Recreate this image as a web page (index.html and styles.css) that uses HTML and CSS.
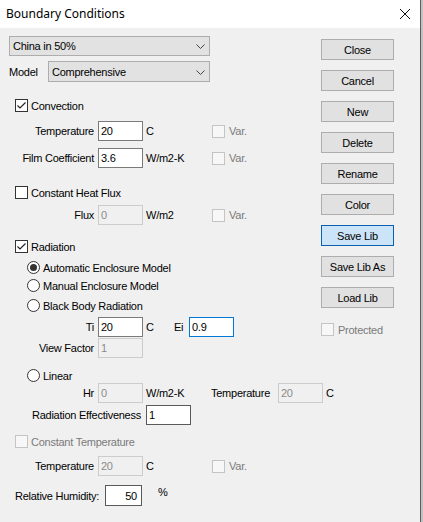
FILE: index.html
```html
<!DOCTYPE html>
<html>
<head>
<meta charset="utf-8">
<title>Boundary Conditions</title>
<link rel="stylesheet" href="styles.css">
</head>
<body>
<div class="window">
  <div class="titlebar">
    <span class="title">Boundary Conditions</span>
    <svg class="close-x" width="12" height="12" viewBox="0 0 12 12"><path d="M1 1 L11 11 M11 1 L1 11" stroke="#111" stroke-width="1"/></svg>
  </div>
  <div class="content">
    <div class="left">
      <div class="row r-lib">
        <div class="combo combo-lib"><span>China in 50%</span><svg width="9" height="5" viewBox="0 0 9 5"><path d="M0.5 0.5 L4.5 4.5 L8.5 0.5" fill="none" stroke="#444" stroke-width="1"/></svg></div>
      </div>
      <div class="row r-model">
        <span class="model-lbl">Model</span>
        <div class="combo combo-model"><span>Comprehensive</span><svg width="9" height="5" viewBox="0 0 9 5"><path d="M0.5 0.5 L4.5 4.5 L8.5 0.5" fill="none" stroke="#444" stroke-width="1"/></svg></div>
      </div>

      <div class="row r-conv">
        <span class="cb"><svg width="11" height="11" viewBox="0 0 11 11"><path d="M1.5 5.5 L4 8 L9.5 2.5" fill="none" stroke="#222" stroke-width="1.2"/></svg></span>
        <span>Convection</span>
      </div>
      <div class="row r-temp">
        <span class="lbl">Temperature</span>
        <span class="field">20</span>
        <span class="unit">C</span>
        <span class="var"><span class="cb cb-dis"></span>Var.</span>
      </div>
      <div class="row r-film">
        <span class="lbl">Film Coefficient</span>
        <span class="field">3.6</span>
        <span class="unit">W/m2-K</span>
        <span class="var"><span class="cb cb-dis"></span>Var.</span>
      </div>

      <div class="row r-chf">
        <span class="cb"></span>
        <span>Constant Heat Flux</span>
      </div>
      <div class="row r-flux">
        <span class="lbl">Flux</span>
        <span class="field field-dis">0</span>
        <span class="unit">W/m2</span>
        <span class="var"><span class="cb cb-dis"></span>Var.</span>
      </div>

      <div class="row r-rad">
        <span class="cb"><svg width="11" height="11" viewBox="0 0 11 11"><path d="M1.5 5.5 L4 8 L9.5 2.5" fill="none" stroke="#222" stroke-width="1.2"/></svg></span>
        <span>Radiation</span>
      </div>
      <div class="row r-auto">
        <span class="radio radio-on"></span>
        <span>Automatic Enclosure Model</span>
      </div>
      <div class="row r-manual">
        <span class="radio"></span>
        <span>Manual Enclosure Model</span>
      </div>
      <div class="row r-black">
        <span class="radio"></span>
        <span>Black Body Radiation</span>
      </div>
      <div class="row r-ti">
        <span class="lbl">Ti</span>
        <span class="field">20</span>
        <span class="unit unit-short">C</span>
        <span class="ei-lbl">Ei</span>
        <span class="field field-focus">0.9</span>
      </div>
      <div class="row r-vf">
        <span class="lbl">View Factor</span>
        <span class="field field-dis">1</span>
      </div>

      <div class="row r-linear">
        <span class="radio"></span>
        <span>Linear</span>
      </div>
      <div class="row r-hr">
        <span class="lbl">Hr</span>
        <span class="field field-dis">0</span>
        <span class="unit unit-hr">W/m2-K</span>
        <span class="temp-lbl">Temperature</span>
        <span class="field field-dis">20</span>
        <span class="unit">C</span>
      </div>
      <div class="row r-eff">
        <span class="lbl lbl-wide">Radiation Effectiveness</span>
        <span class="field field-dark">1</span>
      </div>

      <div class="row r-ct">
        <span class="cb cb-dis"></span>
        <span class="disabled-text">Constant Temperature</span>
      </div>
      <div class="row r-ctemp">
        <span class="lbl">Temperature</span>
        <span class="field field-dis">20</span>
        <span class="unit">C</span>
        <span class="var"><span class="cb cb-dis"></span>Var.</span>
      </div>

      <div class="row r-rh">
        <span class="rh-lbl">Relative Humidity:</span>
        <span class="field field-rh">50</span>
        <span class="pct">%</span>
      </div>
    </div>

    <div class="right">
      <div class="btn">Close</div>
      <div class="btn">Cancel</div>
      <div class="btn">New</div>
      <div class="btn">Delete</div>
      <div class="btn">Rename</div>
      <div class="btn">Color</div>
      <div class="btn btn-focus">Save Lib</div>
      <div class="btn">Save Lib As</div>
      <div class="btn">Load Lib</div>
      <div class="protected"><span class="cb cb-dis cb-prot"></span>Protected</div>
    </div>
  </div>
</div>
</body>
</html>
```

FILE: styles.css
```css
html, body {
  margin: 0;
  padding: 0;
}
body {
  background: #c2c2c2;
  font-family: "Liberation Sans", Arial, sans-serif;
  font-size: 11px;
  letter-spacing: -0.25px;
  color: #000;
  width: 423px;
  height: 522px;
  overflow: hidden;
}
.window {
  width: 420px;
  height: 522px;
  background: #f0f0f0;
  border-right: 1px solid #5c5c5c;
}
.titlebar {
  height: 28px;
  background: #fff;
  display: flex;
  justify-content: space-between;
  align-items: center;
  padding: 0 9px 0 6px;
  box-sizing: border-box;
}
.title {
  font-family: "Noto Sans", "Liberation Sans", sans-serif;
  font-size: 12px;
  letter-spacing: 0;
  color: #000;
  margin-top: -1px;
}
.close-x {
  align-self: flex-start;
  margin-top: 8px;
}
.content {
  display: flex;
}
.left {
  width: 321px;
  flex: none;
}
.right {
  display: flex;
  flex-direction: column;
  gap: 10px;
  padding-top: 11px;
}
.row {
  display: flex;
  align-items: center;
  white-space: nowrap;
}

/* row positions */
.r-lib { margin-top: 8px; height: 20px; }
.r-model { margin-top: 5px; height: 21px; }
.r-conv { margin-top: 17px; height: 13px; }
.r-temp { margin-top: 9px; height: 20px; }
.r-film { margin-top: 7px; height: 20px; }
.r-chf { margin-top: 18px; height: 13px; }
.r-flux { margin-top: 6px; height: 20px; }
.r-rad { margin-top: 15px; height: 13px; }
.r-auto { margin-top: 8px; height: 13px; }
.r-manual { margin-top: 5px; height: 13px; }
.r-black { margin-top: 7px; height: 13px; }
.r-ti { margin-top: 5px; height: 20px; }
.r-vf { margin-top: 1px; height: 20px; }
.r-linear { margin-top: 11px; height: 13px; }
.r-hr { margin-top: 1px; height: 20px; }
.r-eff { margin-top: 2px; height: 20px; }
.r-ct { margin-top: 10px; height: 13px; }
.r-ctemp { margin-top: 8px; height: 20px; }
.r-rh { margin-top: 9px; height: 21px; }

/* combos */
.combo {
  height: 100%;
  box-sizing: border-box;
  border: 1px solid #adadad;
  background: #e2e2e2;
  display: flex;
  align-items: center;
  justify-content: space-between;
  padding: 0 4px 0 3px;
}
.combo svg { margin-top: 1px; }
.combo-lib {
  margin-left: 9px;
  width: 201px;
}
.model-lbl {
  margin-left: 9px;
  width: 39px;
}
.combo-model {
  width: 162px;
}

/* checkbox & radio */
.cb {
  width: 13px;
  height: 13px;
  box-sizing: border-box;
  border: 1px solid #333;
  background: #fff;
  margin-left: 15px;
  margin-right: 3px;
  display: flex;
  align-items: center;
  justify-content: center;
  flex: none;
}
.cb-dis {
  border-color: #c4c4c4;
  background: #f7f7f7;
}
.radio {
  width: 13px;
  height: 13px;
  box-sizing: border-box;
  border: 1px solid #333;
  border-radius: 50%;
  background: #fff;
  margin-left: 27px;
  margin-right: 3px;
  display: flex;
  align-items: center;
  justify-content: center;
  flex: none;
}
.radio-on::after {
  content: "";
  width: 7px;
  height: 7px;
  border-radius: 50%;
  background: #333;
}
.disabled-text {
  color: #7a7a7a;
}

/* labelled fields */
.lbl {
  width: 94px;
  margin-right: 4px;
  text-align: right;
  flex: none;
}
.lbl-wide {
  width: 141px;
  margin-right: 5px;
}
.field {
  width: 45px;
  height: 100%;
  box-sizing: border-box;
  border: 1px solid #7a7a7a;
  background: #fff;
  padding-left: 2px;
  display: flex;
  align-items: center;
  flex: none;
}
.field-dis {
  border-color: #cccccc;
  background: #f0f0f0;
  color: #8a8a8a;
}
.field-focus {
  border-color: #0078d7;
}
.field-dark {
  border-color: #5a5a5a;
}
.unit {
  width: 69px;
  padding-left: 3px;
  box-sizing: border-box;
  flex: none;
}
.unit-short {
  width: 31px;
}
.unit-hr {
  width: 68px;
}
.ei-lbl {
  width: 15px;
  flex: none;
}
.temp-lbl {
  width: 67px;
  flex: none;
}
.var {
  display: flex;
  align-items: center;
  color: #7a7a7a;
}
.var .cb {
  margin-left: 0;
  margin-right: 4px;
}

/* humidity */
.rh-lbl {
  margin-left: 15px;
  width: 90px;
  flex: none;
}
.field-rh {
  width: 37px;
  justify-content: flex-end;
  padding: 0 4px 0 0;
  border-color: #5a5a5a;
}
.pct {
  margin-left: 16px;
  align-self: flex-start;
  margin-top: 1px;
}

/* buttons */
.btn {
  width: 73px;
  height: 21px;
  box-sizing: border-box;
  border: 1px solid #adadad;
  background: #e1e1e1;
  display: flex;
  align-items: center;
  justify-content: center;
}
.btn-focus {
  background: #cce4f7;
  border-color: #0a5fae;
}
.protected {
  margin-top: 5px;
  display: flex;
  align-items: center;
  color: #7a7a7a;
  height: 13px;
}
.cb-prot {
  margin-left: 0;
  margin-right: 4px;
}
```
